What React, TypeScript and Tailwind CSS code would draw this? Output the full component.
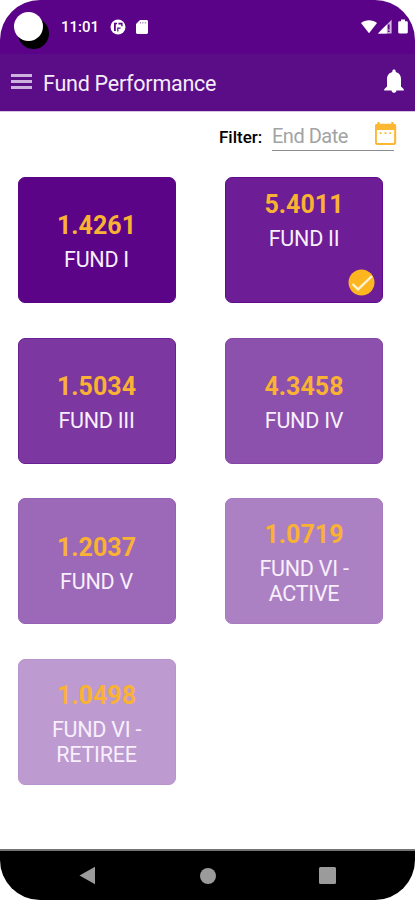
type Fund = {
  value: string;
  name: string;
  color: string;
  selected?: boolean;
};

const funds: Fund[] = [
  { value: '1.4261', name: 'FUND I', color: 'bg-[#5c0488] border-[#5c0488]' },
  { value: '5.4011', name: 'FUND II', color: 'bg-[#6d1d95] border-[#600a8b]', selected: true },
  { value: '1.5034', name: 'FUND III', color: 'bg-[#7c37a0] border-[#6b1f94]' },
  { value: '4.3458', name: 'FUND IV', color: 'bg-[#8c50ad] border-[#8445a7]' },
  { value: '1.2037', name: 'FUND V', color: 'bg-[#9c68b8] border-[#9660b4]' },
  { value: '1.0719', name: 'FUND VI - ACTIVE', color: 'bg-[#ac81c4] border-[#a87bc1]' },
  { value: '1.0498', name: 'FUND VI - RETIREE', color: 'bg-[#bd9bd0] border-[#b995cd]' },
];

const CheckBadge = () => (
  <svg className="mt-auto mr-[7px] self-end" width="27" height="27" viewBox="0 0 27 27">
    <circle cx="13.5" cy="13.5" r="13" fill="#fdb61f" />
    <path d="M4.5 15l5.6 5.4L24 7" fill="none" stroke="#fff3d6" strokeWidth="2.4" />
  </svg>
);

const FundCard = ({ value, name, color, selected }: Fund) => (
  <div
    className={`flex h-[126px] flex-col items-center rounded-[7px] border text-center ${color} ${
      selected ? 'justify-start pt-[9px] pb-[6px]' : 'justify-center pt-[1px]'
    }`}
  >
    <div className="mb-[5px] text-[25px] leading-[35px] font-bold text-[#f9b233]">{value}</div>
    <div className="w-[110px] text-[21.5px] leading-[24.5px] tracking-[-0.25px] text-[#f8effc]">{name}</div>
    {selected && <CheckBadge />}
  </div>
);

const StatusBar = () => (
  <div className="flex h-[54px] items-start bg-[#5b0388] pt-[12px] pl-[14px] text-white">
    <div className="h-[29px] w-[29px] rounded-full bg-white shadow-[5px_7px_0_1px_#000]" />
    <span className="mt-[5px] ml-[18px] w-[38px] text-[15px] leading-[20px] font-medium">11:01</span>
    <svg className="mt-[7px] ml-[11px]" width="16" height="16" viewBox="0 0 16 16">
      <circle cx="8" cy="8" r="7.5" fill="#fff" />
      <path d="M4 3.8h3v1.4H5.8v6.800H4zM8.400 3.800h4.200v3.400h-1.400V5.400H8.400zM7.200 8.400h3.400v1.400H8.400v2.800H7.200z" fill="#5b0388" />
    </svg>
    <svg className="mt-[8px] ml-[10px]" width="12" height="14" viewBox="0 0 12 14">
      <path d="M4 0h6.6c.8 0 1.4.6 1.4 1.4v11.2c0 .8-.6 1.4-1.4 1.4H1.4C.6 14 0 13.4 0 12.6V4z" fill="#fff" />
      <path d="M4.5 2v1.5M6.9 2v1.5M9.3 2v1.5" stroke="#a57abf" strokeWidth="1" />
    </svg>
    <div className="mt-[7px] mr-[7px] ml-auto flex">
      <svg width="16" height="15" viewBox="0 0 16 15">
        <path d="M0 4C4.5.2 11.5.2 16 4L8 14.2z" fill="#fff" />
      </svg>
      <svg className="ml-[1px]" width="14" height="15" viewBox="0 0 14 15">
        <path d="M0 14.5L13.6.8v13.7z" fill="#ceb3dc" />
        <path d="M0 14.5L8.8 5.6v8.9z" fill="#fff" />
        <path d="M10.7 5.5v5M10.7 11.5v1.4" stroke="#5b0388" strokeWidth="1.8" />
      </svg>
      <svg className="ml-[6px]" width="10" height="15" viewBox="0 0 10 15">
        <path
          d="M3 .5h4v1.7h1.6c.7 0 1.2.5 1.2 1.2v9.9c0 .7-.5 1.2-1.2 1.2H1.4c-.7 0-1.2-.5-1.2-1.2V3.4c0-.7.5-1.2 1.2-1.2H3z"
          fill="#fff"
        />
      </svg>
    </div>
  </div>
);

const AppBar = () => (
  <header className="flex h-[58px] items-center border-b border-[#d9c3e6] bg-[#5b0d88] pr-[11px] pl-[11px]">
    <button className="mb-[3px] flex flex-col gap-[3px]" aria-label="Menu">
      <span className="h-[3px] w-[21px] bg-[#cdb2dd]" />
      <span className="h-[3px] w-[21px] bg-[#cdb2dd]" />
      <span className="h-[3px] w-[21px] bg-[#cdb2dd]" />
    </button>
    <h1 className="mt-[3px] ml-[11px] text-[21.5px] leading-[28px] tracking-[-0.25px] text-[#f5ecfa]">
      Fund Performance
    </h1>
    <button className="mb-[2px] ml-auto" aria-label="Notifications">
      <svg width="20" height="25" viewBox="0 0 20 25">
        <path
          d="M10 .5c1 0 1.7.7 1.7 1.7v.9c3.2.8 5.3 3.4 5.3 7v7.4l2.8 2.7v1.4H.2v-1.4L3 17.5v-7.4c0-3.600 2.100-6.200 5.300-7v-.9C8.300 1.200 9 .5 10 .5zM7.600 21.600h4.800c0 1.300-1.100 2.300-2.400 2.300s-2.400-1-2.400-2.300z"
          fill="#fff"
        />
      </svg>
    </button>
  </header>
);

const DateFilter = () => (
  <div className="flex h-[65px] items-start pt-[9px] pl-[219px]">
    <span className="mt-[5px] w-[53px] text-[17px] leading-[22px] font-medium text-black">Filter:</span>
    <div className="flex h-[30px] w-[122px] items-start border-b border-[#8c8c8c]">
      <span className="mt-[4px] text-[20px] leading-[22px] tracking-[-0.5px] whitespace-nowrap text-[#a3a3a3]">
        End Date
      </span>
    </div>
    <svg className="-ml-[20px]" width="23" height="25" viewBox="0 0 23 25">
      <path
        d="M3.5 1h2.2v1.7h11.6V1h2.2v1.7h.6c1.2 0 2.1.9 2.1 2.1v17c0 1.2-.9 2.1-2.1 2.1H3.1C1.9 23.9 1 23 1 21.8v-17c0-1.2.9-2.1 2.1-2.1h.4zM2.9 9v11.9c0 .6.4 1 1 1h15.2c.6 0 1-.4 1-1V9z"
        fill="#fdb833"
        fillRule="evenodd"
      />
      <path d="M5.7 11.2h1.9v1.9H5.7zM10.5 11.2h1.9v1.9h-1.9zM15.3 11.2h1.9v1.9h-1.9z" fill="#fdb833" />
    </svg>
  </div>
);

const NavigationBar = () => (
  <nav className="flex h-[51px] items-center justify-between border-t-2 border-[#747474] bg-black pr-[79px] pl-[79px]">
    <svg width="17" height="19" viewBox="0 0 17 19">
      <path d="M0.5 9.5L16 .8v17.4z" fill="#9b9b9b" />
    </svg>
    <div className="h-[16px] w-[16px] rounded-full bg-[#9b9b9b]" />
    <div className="h-[17px] w-[17px] rounded-[1.5px] bg-[#9b9b9b]" />
  </nav>
);

export default function App() {
  return (
    <div className="h-[900px] w-[415px] bg-white font-['Roboto',sans-serif]">
      <div className="flex h-full flex-col overflow-hidden rounded-[40px] bg-white">
        <StatusBar />
        <AppBar />
        <DateFilter />
        <main className="grid grid-cols-[158px_158px] gap-x-[49.5px] gap-y-[34.7px] pl-[17.5px]">
          {funds.map((fund) => (
            <FundCard key={fund.name} {...fund} />
          ))}
        </main>
        <div className="mt-auto">
          <NavigationBar />
        </div>
      </div>
    </div>
  );
}
